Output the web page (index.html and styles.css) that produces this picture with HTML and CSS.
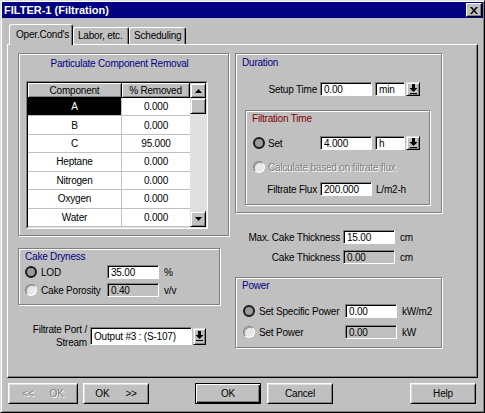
FILE: index.html
```html
<!doctype html>
<html lang="en">
<head>
	<meta charset="UTF-8" />
	<title>FILTER-1 (Filtration)</title>
	<link rel="stylesheet" href="styles.css">
</head>
<body>
    <div class="dialog">
        <div class="titlebar">
            <span class="caption">FILTER-1 (Filtration)</span>
            <span class="close"><svg width="8" height="7" viewBox="0 0 8 7"><path d="M0 0h2l2 2.5L6 0h2L5 3.5 8 7H6L4 4.5 2 7H0l3-3.5z" fill="#000"/></svg></span>
        </div>

        <div class="tabs">
            <div class="tab active">Oper.Cond's</div>
            <div class="tab t-labor">Labor, etc.</div>
            <div class="tab t-sched">Scheduling</div>
        </div>

        <div class="page">
            <div class="col col-left">
                <div class="group particulate">
                    <div class="group-title title-center">Particulate Component Removal</div>
                    <div class="grid-wrap">
                        <div class="grid-inner">
                            <div class="grid">
                                <div class="hd">Component</div><div class="hd">% Removed</div>
                                <div class="cell name selected">A</div><div class="cell">0.000</div>
                                <div class="cell name">B</div><div class="cell">0.000</div>
                                <div class="cell name">C</div><div class="cell">95.000</div>
                                <div class="cell name">Heptane</div><div class="cell">0.000</div>
                                <div class="cell name">Nitrogen</div><div class="cell">0.000</div>
                                <div class="cell name">Oxygen</div><div class="cell">0.000</div>
                                <div class="cell name">Water</div><div class="cell">0.000</div>
                            </div>
                            <div class="vscroll">
                                <div class="sb-btn sb-up"><svg width="7" height="4" viewBox="0 0 7 4"><path d="M3.5 0 7 4H0z" fill="#000"/></svg></div>
                                <div class="sb-thumb"></div>
                                <div class="sb-track"></div>
                                <div class="sb-btn"><svg width="7" height="4" viewBox="0 0 7 4"><path d="M0 0h7L3.5 4z" fill="#000"/></svg></div>
                            </div>
                        </div>
                    </div>
                </div>

                <div class="group dryness">
                    <div class="group-title">Cake Dryness</div>
                    <div class="opt-row">
                        <span class="radio checked"></span>
                        <span class="opt-label">LOD</span>
                        <span class="field">35.00</span>
                        <span class="unit">%</span>
                    </div>
                    <div class="opt-row">
                        <span class="radio"></span>
                        <span class="opt-label">Cake Porosity</span>
                        <span class="field off">0.40</span>
                        <span class="unit">v/v</span>
                    </div>
                </div>

                <div class="port-row">
                    <div class="port-label">Filtrate Port /<br>Stream</div>
                    <div class="field select">Output #3 : (S-107)</div>
                    <span class="drop-btn tall"><svg width="9" height="10" viewBox="0 0 9 10"><path d="M3 0h3v4h2.5L4.5 8 .5 4H3z M1 9h7v1H1z" fill="#000"/></svg></span>
                </div>
            </div>

            <div class="col col-right">
                <div class="group duration">
                    <div class="group-title">Duration</div>
                    <div class="form-row setup-row">
                        <span class="lbl lbl-setup">Setup Time</span>
                        <span class="field">0.00</span>
                        <span class="field unit-box">min</span>
                        <span class="drop-btn"><svg width="9" height="10" viewBox="0 0 9 10"><path d="M3 0h3v4h2.5L4.5 8 .5 4H3z M1 9h7v1H1z" fill="#000"/></svg></span>
                    </div>

                    <div class="group filtration">
                        <div class="group-title red">Filtration Time</div>
                        <div class="form-row set-row">
                            <span class="radio checked"></span>
                            <span class="lbl lbl-set">Set</span>
                            <span class="field">4.000</span>
                            <span class="field unit-box">h</span>
                            <span class="drop-btn"><svg width="9" height="10" viewBox="0 0 9 10"><path d="M3 0h3v4h2.5L4.5 8 .5 4H3z M1 9h7v1H1z" fill="#000"/></svg></span>
                        </div>
                        <div class="form-row calc-row">
                            <span class="radio"></span>
                            <span class="lbl disabled">Calculate based on filtrate flux</span>
                        </div>
                        <div class="form-row flux-row">
                            <span class="lbl lbl-flux">Filtrate Flux</span>
                            <span class="field">200.000</span>
                            <span class="unit">L/m2-h</span>
                        </div>
                    </div>
                </div>

                <div class="form-row thick-row">
                    <span class="lbl lbl-thick">Max. Cake Thickness</span>
                    <span class="field">15.00</span>
                    <span class="unit">cm</span>
                </div>
                <div class="form-row thick-row second">
                    <span class="lbl lbl-thick">Cake Thickness</span>
                    <span class="field off">0.00</span>
                    <span class="unit">cm</span>
                </div>

                <div class="group power">
                    <div class="group-title">Power</div>
                    <div class="form-row power-row">
                        <span class="radio checked"></span>
                        <span class="lbl lbl-power">Set Specific Power</span>
                        <span class="field">0.00</span>
                        <span class="unit">kW/m2</span>
                    </div>
                    <div class="form-row power-row second">
                        <span class="radio"></span>
                        <span class="lbl lbl-power">Set Power</span>
                        <span class="field off">0.00</span>
                        <span class="unit">kW</span>
                    </div>
                </div>
            </div>
        </div>

        <div class="buttons">
            <div class="btn btn-prev disabled"><span>&lt;&lt;</span><span>OK</span></div>
            <div class="btn btn-next"><span>OK</span><span>&gt;&gt;</span></div>
            <div class="btn btn-ok default">OK</div>
            <div class="btn btn-cancel">Cancel</div>
            <div class="btn btn-help">Help</div>
        </div>
    </div>
</body>
</html>
```

FILE: styles.css
```css
* { margin: 0; padding: 0; box-sizing: border-box; }
html, body { width: 485px; height: 413px; overflow: hidden; background: #c0c0c0; }
body { font-family: "Liberation Sans", Arial, sans-serif; font-size: 10px; letter-spacing: -0.2px; color: #000; white-space: nowrap; }

/* window frame */
.dialog { width: 485px; height: 413px; padding: 1px; display: flex; flex-direction: column; border: 1px solid; border-color: #dfdfdf #000 #000 #dfdfdf; box-shadow: inset 1px 1px #fff, inset -1px -1px #808080; }
.titlebar { height: 16px; display: flex; align-items: center; justify-content: space-between; padding: 0 1px 0 2px; background: #000080; }
.titlebar .caption { font-size: 11px; font-weight: bold; letter-spacing: 0; color: #fff; }
.titlebar .close { width: 16px; height: 14px; display: flex; align-items: center; justify-content: center; background: #c0c0c0; border: 1px solid; border-color: #fff #000 #000 #fff; box-shadow: inset -1px -1px #808080; }

/* tabs */
.tabs { height: 20px; margin: 6px 0 0 7px; display: flex; align-items: flex-end; }
.tab { height: 17px; padding: 1px 0 0 4px; line-height: 14px; background: #c0c0c0; border: 1px solid; border-bottom: 0; border-color: #fff #000 #000 #fff; border-radius: 3px 3px 0 0; box-shadow: inset -1px 0 #808080; }
.tab.active { width: 64px; height: 21px; margin-bottom: -1px; padding: 3px 0 0 6px; position: relative; z-index: 1; }
.tab.t-labor { width: 56px; }
.tab.t-sched { width: 57px; }

.page { width: 471px; height: 334px; margin-left: 5px; display: flex; gap: 6px; padding: 8px 0 0 10px; border: 1px solid; border-color: #fff #000 #000 #fff; box-shadow: inset -1px -1px #808080; }
.col { display: flex; flex-direction: column; }
.col-left { width: 211px; }
.col-right { width: 207px; }

/* etched group boxes */
.group { border: 1px solid #808080; box-shadow: inset 1px 1px #fff, 1px 1px #fff; }
.group-title { line-height: 12px; color: #000080; }
.group-title.red { color: #800000; }
.group-title.title-center { width: 187px; text-align: center; }

.particulate { height: 183px; padding: 4px 0 0 7px; }
.grid-wrap { width: 182px; height: 148px; margin-top: 11px; border: 1px solid; border-color: #808080 #fff #fff #808080; }
.grid-inner { height: 100%; display: flex; border: 1px solid; border-color: #000 #dfdfdf #dfdfdf #000; }
.grid { width: 162px; display: grid; grid-template-columns: 94px 68px; grid-template-rows: 15px repeat(7, 1fr); background: #fff; }
.grid .hd { display: flex; align-items: center; justify-content: center; background: #c0c0c0; border-right: 1px solid #000; border-bottom: 1px solid #000; box-shadow: inset 1px 1px #fff, inset -1px -1px #808080; }
.grid .cell { display: flex; align-items: center; justify-content: center; border-bottom: 1px solid #c0c0c0; }
.grid .cell.name { border-right: 1px solid #c0c0c0; }
.grid .cell.selected { background: #000; color: #fff; }

.vscroll { width: 16px; display: flex; flex-direction: column; background: #e0e0e0; }
.sb-btn, .sb-thumb { height: 16px; display: flex; align-items: center; justify-content: center; background: #c0c0c0; border: 1px solid; border-color: #dfdfdf #000 #000 #dfdfdf; box-shadow: inset 1px 1px #fff, inset -1px -1px #808080; }
.sb-btn.sb-up { height: 15px; }
.sb-track { flex: 1; }

/* shared controls */
.field { width: 52px; height: 14px; display: inline-flex; align-items: center; padding-left: 3px; background: #fff; border: 1px solid; border-color: #808080 #fff #fff #808080; box-shadow: inset 1px 1px #000; }
.field.off { background: #c0c0c0; }
.unit { margin-left: 5px; }
.unit-box { width: 30px; margin-left: 3px; }
.drop-btn { width: 14px; height: 14px; margin-left: 1px; display: inline-flex; align-items: center; justify-content: center; background: #c0c0c0; border: 1px solid; border-color: #dfdfdf #000 #000 #dfdfdf; box-shadow: inset 1px 1px #fff, inset -1px -1px #808080; }
.drop-btn.tall { width: 13px; height: 17px; }

.radio { width: 12px; height: 12px; flex: none; border-radius: 50%; background: #e8e8e8; border: 1px solid; border-color: #808080 #fff #fff #808080; box-shadow: inset 1px 1px #a0a0a0; }
.radio.checked { border: 2px solid #1c1c1c; background: #9a9a9a; box-shadow: none; }

.disabled { color: #808080; text-shadow: 1px 1px #fff; }

/* cake dryness */
.dryness { width: 202px; height: 57px; margin-top: 12px; padding: 2px 0 0 6px; }
.opt-row { height: 18px; display: flex; align-items: center; }
.opt-row .radio { margin-right: 4px; }
.opt-label { width: 66px; }

.port-row { margin-top: 18px; display: flex; align-items: center; }
.port-label { width: 69px; margin-right: 3px; text-align: right; line-height: 13px; }
.field.select { width: 102px; height: 18px; }

/* right column */
.form-row { height: 14px; display: flex; align-items: center; }
.duration { height: 160px; padding: 3px 0 0 6px; }
.setup-row { margin-top: 13px; }
.lbl-setup { width: 75px; margin-right: 3px; text-align: right; }

.filtration { width: 185px; height: 95px; margin: 14px 0 0 3px; padding: 2px 0 0 6px; }
.set-row { margin-top: 11px; }
.set-row .radio, .calc-row .radio { margin: 0 3px 0 1px; }
.lbl-set { width: 49px; margin-right: 3px; }
.calc-row { margin-top: 10px; }
.flux-row { margin-top: 8px; }
.lbl-flux { width: 65px; margin-right: 3px; text-align: right; }
.flux-row .unit { margin-left: 4px; }

.thick-row { margin-top: 17px; }
.thick-row.second { margin-top: 6px; }
.lbl-thick { width: 105px; margin-right: 3px; text-align: right; }

.power { height: 71px; margin-top: 13px; padding: 2px 0 0 6px; }
.power-row { margin-top: 12px; }
.power-row.second { margin-top: 7px; }
.power-row .radio { margin: 0 4px 0 1px; }
.lbl-power { width: 83px; margin-right: 3px; }

/* bottom buttons */
.buttons { height: 21px; margin-top: 5px; display: flex; padding: 0 7px 0 6px; }
.btn { width: 66px; height: 21px; display: flex; align-items: center; justify-content: center; gap: 16px; background: #c0c0c0; border: 1px solid; border-color: #fff #000 #000 #fff; box-shadow: inset 1px 1px #dfdfdf, inset -1px -1px #808080; }
.btn-prev { width: 70px; margin-right: 5px; }
.btn-next { margin-right: 46px; }
.btn-ok { margin-right: 6px; }
.btn.default { border-color: #000; box-shadow: inset 1px 1px #fff, inset -1px -1px #000, inset -2px -2px #808080; }
.btn-help { margin-left: auto; }
```
